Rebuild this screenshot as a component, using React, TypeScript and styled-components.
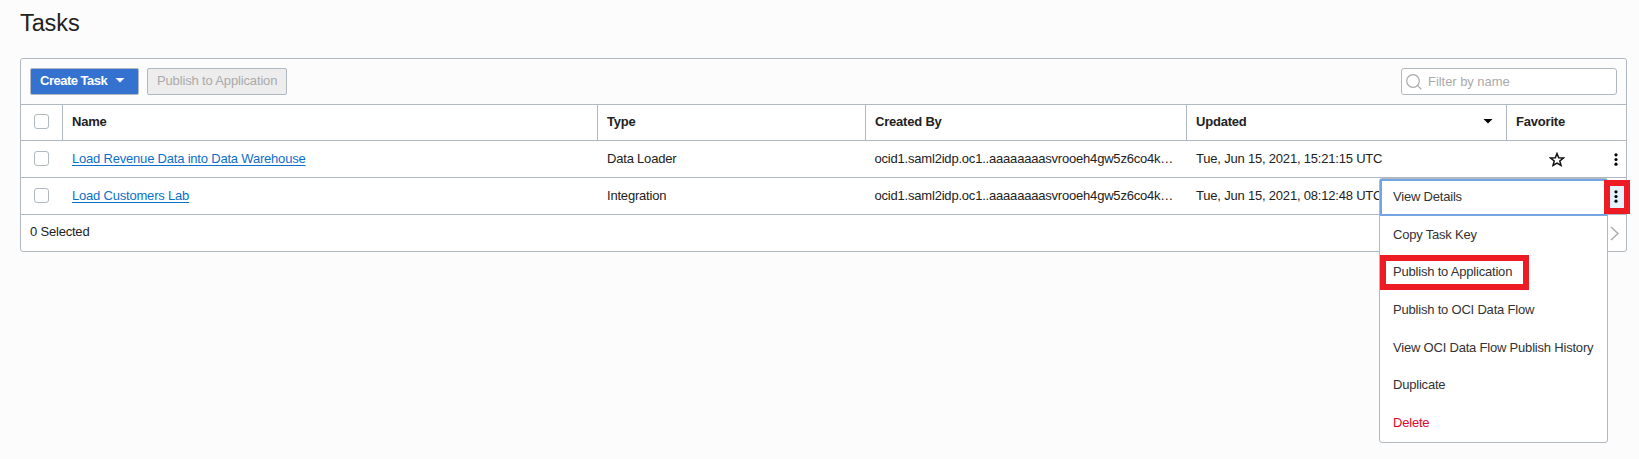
import React from "react";
import styled, { createGlobalStyle } from "styled-components";

const line = "#b0b8c2";

const GlobalStyle = createGlobalStyle`
  * { box-sizing: border-box; }
  body {
    margin: 0;
    min-height: 100vh;
    background: #fcfcfc;
    color: #222;
    font: 13px/20px "Liberation Sans", Arial, sans-serif;
    letter-spacing: -0.2px;
    overflow: hidden;
  }
  button, input { font: inherit; letter-spacing: inherit; }
`;

const Page = styled.main`
  padding: 8px 12px 0 20px;
`;

const Title = styled.h1`
  margin: 0 0 20px;
  font-size: 23.5px;
  line-height: 30px;
  font-weight: 400;
  letter-spacing: -0.1px;
`;

const Panel = styled.section`
  position: relative;
  border: 1px solid ${line};
  border-radius: 3px;
  background: #fff;
`;

const Toolbar = styled.div`
  display: flex;
  gap: 8px;
  height: 45px;
  padding: 9px 9px 0;
  background: #fcfcfc;
  border-radius: 3px 3px 0 0;
`;

const Button = styled.button<{ $primary?: boolean }>`
  display: flex;
  align-items: center;
  gap: 8px;
  height: 27px;
  width: ${(p) => (p.$primary ? 109 : 140)}px;
  padding: 0 9px 2px;
  border: 1px solid ${line};
  border-radius: 2px;
  white-space: nowrap;
  background: ${(p) => (p.$primary ? "#3572cf" : "#ededed")};
  color: ${(p) => (p.$primary ? "#fff" : "#aaa")};
  font-weight: ${(p) => (p.$primary ? 700 : 400)};
  letter-spacing: ${(p) => (p.$primary ? "-0.5px" : "-0.15px")};
`;

const Search = styled.label`
  display: flex;
  align-items: center;
  gap: 6px;
  width: 216px;
  height: 27px;
  margin-left: auto;
  padding-left: 4px;
  border: 1px solid ${line};
  border-radius: 3px;
  background: #fff;
`;

const SearchInput = styled.input`
  flex: 1;
  min-width: 0;
  height: 20px;
  padding: 0;
  border: 0;
  outline: 0;
  background: none;
  letter-spacing: -0.05px;
  &::placeholder { color: #aaa; opacity: 1; }
`;

const Row = styled.div<{ $head?: boolean }>`
  display: grid;
  grid-template-columns: 42px 535px 268px 321px 320px 1fr;
  height: ${(p) => (p.$head ? 36 : 37)}px;
  border-top: 1px solid ${line};
  font-weight: ${(p) => (p.$head ? 700 : 400)};
`;

const Cell = styled.div<{ $rule?: boolean; $between?: boolean }>`
  display: flex;
  align-items: center;
  justify-content: ${(p) => (p.$between ? "space-between" : "flex-start")};
  min-width: 0;
  padding: 0 13px 0 9px;
  border-right: ${(p) => (p.$rule ? `1px solid ${line}` : "0")};
`;

const HeadCell = styled(Cell)`
  padding-bottom: 2px;
`;

const CheckCell = styled(Cell)`
  padding: 0 0 2px 13px;
`;

const ActionCell = styled(Cell)`
  padding: 0 8px 0 42px;
`;

const Checkbox = styled.input`
  appearance: none;
  width: 15px;
  height: 15px;
  margin: 0;
  border: 1px solid ${line};
  border-radius: 3px;
  background: #fff;
`;

const Text = styled.span`
  white-space: nowrap;
`;

const OwnerText = styled(Text)`
  margin-left: -0.5px;
`;

const Link = styled.a`
  color: #0b6fcb;
  text-decoration: underline;
  text-underline-offset: 2px;
  white-space: nowrap;
`;

const Footer = styled.div`
  display: flex;
  align-items: center;
  justify-content: space-between;
  height: 37px;
  padding: 0 7px 3px 9px;
  border-top: 1px solid ${line};
`;

const NextIcon = styled.svg`
  margin-top: 4px;
`;

const Menu = styled.div`
  position: absolute;
  left: 1358px;
  top: 119px;
  width: 229px;
  height: 265px;
  display: grid;
  grid-template-rows: 37px repeat(6, 37.6px);
  border: 1px solid ${line};
  border-radius: 3px;
  background: #fff;
`;

const MenuItem = styled.div<{ $focus?: boolean; $danger?: boolean }>`
  display: flex;
  align-items: center;
  padding: 0 0 ${(p) => (p.$focus ? 2 : 0)}px ${(p) => (p.$focus ? 11 : 13)}px;
  border: ${(p) => (p.$focus ? "2px solid #73a5e2" : "0")};
  color: ${(p) => (p.$danger ? "#e0062c" : "#333")};
  white-space: nowrap;
`;

const Highlight = styled.div<{ $x: number; $y: number; $w: number; $h: number }>`
  position: absolute;
  left: ${(p) => p.$x}px;
  top: ${(p) => p.$y}px;
  width: ${(p) => p.$w}px;
  height: ${(p) => p.$h}px;
  border: 6px solid #ed1c24;
`;

const ActiveHighlight = styled(Highlight)`
  display: grid;
  place-items: center;
  padding: 0 2px 1px 0;
  background: #e5f1fb;
`;

const Caret = ({ color }: { color: string }) => (
  <svg width="10" height="5" viewBox="0 0 10 5"><path d="M0.5 0H9.5L5 4.6Z" fill={color} /></svg>
);

const Dots = () => (
  <svg width="4" height="13" viewBox="0 0 4 13" fill="#000">
    <circle cx="2" cy="1.8" r="1.6" /><circle cx="2" cy="6.5" r="1.6" /><circle cx="2" cy="11.2" r="1.6" />
  </svg>
);

const Star = () => (
  <svg width="16" height="15" viewBox="0 0 16 15" fill="none" stroke="#111" strokeWidth="1.5">
    <path d="M8 1.5L9.7 5.7L14.4 6L10.8 9L12 13.4L8 11L4 13.4L5.2 9L1.6 6L6.3 5.7Z" />
  </svg>
);

const Magnifier = () => (
  <svg width="16" height="16" viewBox="0 0 16 16" fill="none" stroke="#aaa" strokeWidth="1.2">
    <circle cx="7" cy="7" r="6.3" /><path d="M11.4 11.4L15.3 15.3" />
  </svg>
);

const tasks = [
  { name: "Load Revenue Data into Data Warehouse", type: "Data Loader", updated: "Tue, Jun 15, 2021, 15:21:15 UTC", favorite: true },
  { name: "Load Customers Lab", type: "Integration", updated: "Tue, Jun 15, 2021, 08:12:48 UTC", favorite: false },
];

const actions = ["View Details", "Copy Task Key", "Publish to Application", "Publish to OCI Data Flow", "View OCI Data Flow Publish History", "Duplicate", "Delete"];

export default function App() {
  return (
    <Page>
      <GlobalStyle />
      <Title>Tasks</Title>
      <Panel>
        <Toolbar>
          <Button $primary>Create Task <Caret color="#fff" /></Button>
          <Button disabled>Publish to Application</Button>
          <Search><Magnifier /><SearchInput placeholder="Filter by name" /></Search>
        </Toolbar>
        <Row $head>
          <CheckCell $rule><Checkbox type="checkbox" /></CheckCell>
          <HeadCell $rule><Text>Name</Text></HeadCell>
          <HeadCell $rule><Text>Type</Text></HeadCell>
          <HeadCell $rule><Text>Created By</Text></HeadCell>
          <HeadCell $rule $between><Text>Updated</Text><Caret color="#000" /></HeadCell>
          <HeadCell><Text>Favorite</Text></HeadCell>
        </Row>
        {tasks.map((t) => (
          <Row key={t.name}>
            <CheckCell><Checkbox type="checkbox" /></CheckCell>
            <Cell><Link>{t.name}</Link></Cell>
            <Cell><Text>{t.type}</Text></Cell>
            <Cell><OwnerText>ocid1.saml2idp.oc1..aaaaaaaasvrooeh4gw5z6co4k…</OwnerText></Cell>
            <Cell><Text>{t.updated}</Text></Cell>
            <ActionCell $between>{t.favorite && <><Star /><Dots /></>}</ActionCell>
          </Row>
        ))}
        <Footer>
          <Text>0 Selected</Text>
          <NextIcon width="9" height="15" viewBox="0 0 9 15" fill="none" stroke="#aaa" strokeWidth="1.4">
            <path d="M1 1L8 7.5L1 14" />
          </NextIcon>
        </Footer>
        <Menu>
          {actions.map((a, i) => (
            <MenuItem key={a} $focus={i === 0} $danger={a === "Delete"}>{a}</MenuItem>
          ))}
        </Menu>
        <Highlight $x={1359} $y={196} $w={149} $h={35} />
        <ActiveHighlight $x={1583} $y={121} $w={26} $h={34}><Dots /></ActiveHighlight>
      </Panel>
    </Page>
  );
}
